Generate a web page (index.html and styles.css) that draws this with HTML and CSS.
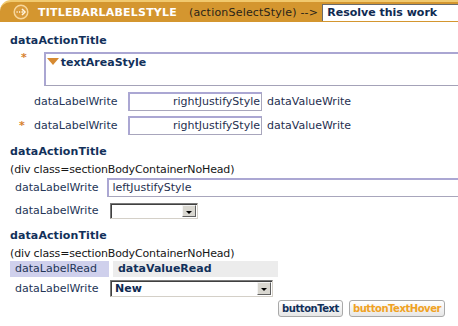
FILE: index.html
```html
<!DOCTYPE html>
<html lang="en">
<head>
    <meta charset="UTF-8">
    <title>Style Sheet Sample</title>
    <link rel="stylesheet" href="styles.css">
</head>
<body>

<!-- Title bar -->
<div class="titlebar">
    <span class="tb-icon">
        <svg width="16" height="16" viewBox="0 0 16 16">
            <circle cx="8" cy="8" r="6.8" fill="#d99a3a" stroke="#f7d69a" stroke-width="1.5"/>
            <path d="M3.5 8h1.2M6 8h1.2M8.5 8h1.5" stroke="#fff6e0" stroke-width="1.4"/>
            <path d="M9 5l3 3-3 3" fill="none" stroke="#fff6e0" stroke-width="1.5"/>
        </svg>
    </span>
    <span class="tb-label">TITLEBARLABELSTYLE</span>
    <span class="tb-action">(actionSelectStyle) --&gt;</span>
    <div class="tb-input">Resolve this work</div>
</div>

<!-- Section one -->
<div class="section first">
    <div class="action-title">dataActionTitle</div>
    <div class="textarea-row">
        <span class="req">*</span>
        <div class="textarea-box"><span class="tri"></span>textAreaStyle</div>
    </div>
    <div class="row wide">
        <span class="req"></span>
        <span class="label">dataLabelWrite</span>
        <div class="input right">rightJustifyStyle</div>
        <span class="value">dataValueWrite</span>
    </div>
    <div class="row wide">
        <span class="req">*</span>
        <span class="label">dataLabelWrite</span>
        <div class="input right">rightJustifyStyle</div>
        <span class="value">dataValueWrite</span>
    </div>
</div>

<!-- Section two -->
<div class="section">
    <div class="action-title">dataActionTitle</div>
    <div class="note">(div class=sectionBodyContainerNoHead)</div>
    <div class="row after-note">
        <span class="label">dataLabelWrite</span>
        <div class="input long">leftJustifyStyle</div>
    </div>
    <div class="row sel-row">
        <span class="label">dataLabelWrite</span>
        <div class="select short"><span class="sel-text"></span><span class="sel-btn"></span></div>
    </div>
</div>

<!-- Section three -->
<div class="section">
    <div class="action-title">dataActionTitle</div>
    <div class="note short-note">(div class=sectionBodyContainerNoHead)</div>
    <div class="row read-row">
        <span class="label read">dataLabelRead</span>
        <span class="value-read">dataValueRead</span>
    </div>
    <div class="row sel-row2">
        <span class="label">dataLabelWrite</span>
        <div class="select mid"><span class="sel-text">New</span><span class="sel-btn"></span></div>
    </div>
    <div class="buttons">
        <span class="btn">buttonText</span>
        <span class="btn hover">buttonTextHover</span>
    </div>
</div>

</body>
</html>
```

FILE: styles.css
```css
body { margin: 0; font-family: "DejaVu Sans", Verdana, sans-serif; font-size: 11px; color: #1f2f4f; background: #fff; width: 458px; height: 326px; overflow: hidden; }

.titlebar { display: flex; align-items: center; background: #d4962f; border-top: 2px solid #f1c96e; border-top-left-radius: 11px; box-sizing: border-box; height: 22px; padding-left: 13px; white-space: nowrap; }
.tb-icon { width: 16px; height: 16px; display: flex; }
.tb-label { color: #fff; font-weight: bold; font-size: 11px; margin-left: 9px; letter-spacing: 0.2px; }
.tb-action { color: #2a2418; margin-left: 12px; font-size: 11px; letter-spacing: 0.2px; }
.tb-input { margin-left: 4px; height: 17px; flex: 1; background: #fff; border-top: 1px solid #6b6b6b; border-left: 1px solid #6b6b6b; box-sizing: border-box; padding-left: 4px; font-weight: bold; color: #0f2a52; line-height: 16px; margin-top: 1px; }

.section { padding-left: 10px; }
.action-title { font-weight: bold; color: #12305a; line-height: 16px; margin-top: 9px; letter-spacing: 0.1px; }
.section.first .action-title { margin-top: 11px; }

.req { color: #d7812e; font-weight: bold; width: 24px; display: inline-block; text-align: right; padding-right: 3px; box-sizing: border-box; }
.textarea-row { display: flex; margin-top: 3px; }
.textarea-row .req { width: 35px; text-align: left; padding-left: 11px; line-height: 12px; }
.textarea-box { width: 440px; height: 34px; box-sizing: border-box; border-top: 2px solid #aaa6d2; border-left: 2px solid #aaa6d2; border-bottom: 1px solid #a4a2b8; font-weight: bold; color: #12305a; padding: 2px 0 0 1px; line-height: 14px; }
.tri { display: inline-block; width: 0; height: 0; border-left: 6px solid transparent; border-right: 6px solid transparent; border-top: 7px solid #d68a32; margin-right: 2px; vertical-align: 1px; }

.row { display: flex; align-items: center; height: 19px; margin-top: 5px; white-space: nowrap; }
.section.first .row:first-of-type { margin-top: 6px; }
.row.after-note { margin-top: 0; }
.row.wide .req { width: 24px; padding-left: 9px; text-align: left; }
.row.wide .label { width: 94px; padding-left: 0; }
.label { width: 95px; padding-left: 5px; color: #233557; line-height: 16px; }
.input { height: 19px; box-sizing: border-box; border-top: 2px solid #aba7d3; border-left: 2px solid #aba7d3; border-right: 1px solid #a8a6bc; border-bottom: 1px solid #a8a6bc; line-height: 15px; color: #1f2f4f; }
.input.right { width: 134px; text-align: right; padding-right: 1px; }
.input.long { width: 360px; padding-left: 3px; border-right: none; }
.value { margin-left: 5px; }
.row.wide:nth-of-type(3) { margin-top: 6px; }

.note { line-height: 16px; margin-top: 2px; color: #161616; letter-spacing: -0.15px; }
.short-note { line-height: 15px; }

.sel-row { margin-top: 6px; height: 16px; }
.select { display: flex; box-sizing: border-box; background: #fff; border-top: 1px solid #7a7a7a; border-left: 1px solid #7a7a7a; border-right: 1px solid #d4d0c8; border-bottom: 1px solid #d4d0c8; box-shadow: inset 1px 1px 0 #404040; padding: 1px; }
.select.short { width: 88px; height: 16px; }
.select.mid { width: 163px; height: 17px; }
.sel-text { flex: 1; padding-left: 3px; font-weight: bold; color: #0f2a52; line-height: 13px; }
.sel-btn { width: 14px; background: #d9d7d0; border: 1px solid; border-color: #f4f4f4 #606060 #606060 #f4f4f4; box-sizing: border-box; position: relative; }
.sel-btn::after { content: ""; position: absolute; left: 3px; top: 5px; border-left: 3px solid transparent; border-right: 3px solid transparent; border-top: 3px solid #000; }

.read-row { margin-top: 0; height: 16px; }
.label.read { background: #cfd0ec; width: 94px; line-height: 16px; }
.value-read { background: #ececec; width: 160px; padding-left: 5px; font-weight: bold; color: #12305a; line-height: 16px; margin-left: 4px; }
.sel-row2 { margin-top: 3px; height: 17px; }

.buttons { display: flex; justify-content: flex-end; gap: 6px; margin-top: 3px; padding-right: 13px; }
.btn { height: 17px; box-sizing: border-box; border: 1px solid #a9a9a9; border-radius: 3px; background: linear-gradient(#ffffff, #e6e6e6); font-weight: bold; font-size: 10px; letter-spacing: -0.45px; color: #12305a; line-height: 15px; padding: 0 3px; }
.btn.hover { color: #f0a224; }
```
